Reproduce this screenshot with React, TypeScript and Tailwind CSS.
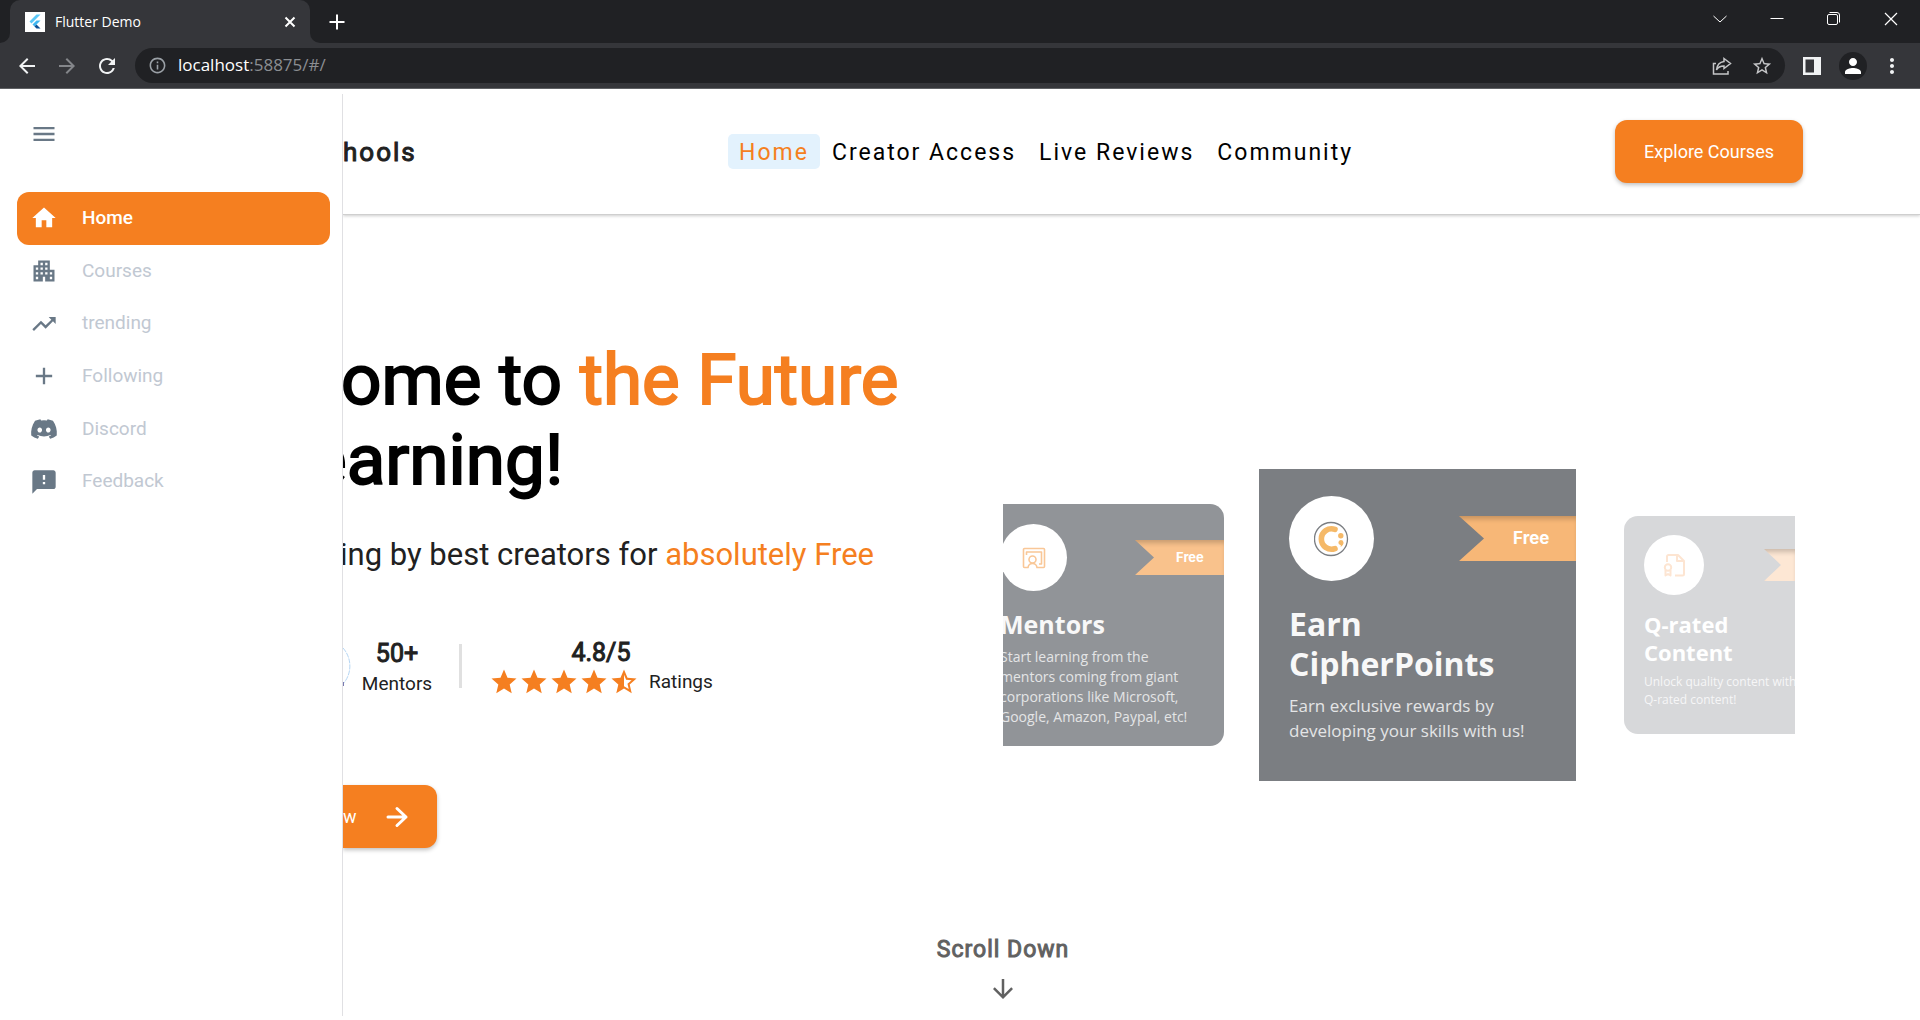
import type { ReactNode } from "react";
import { FaDiscord } from "react-icons/fa";
import {
  MdAdd,
  MdApartment,
  MdArrowBack,
  MdArrowDownward,
  MdArrowForward,
  MdFeedback,
  MdHome,
  MdInfoOutline,
  MdMenu,
  MdMoreVert,
  MdPerson,
  MdRefresh,
  MdStar,
  MdStarHalf,
  MdStarOutline,
  MdTrendingUp,
} from "react-icons/md";

function FlutterLogo() {
  return (
    <svg viewBox="0 0 20 20" className="size-5 bg-white" aria-hidden="true">
      <path d="M11.500 2.500h4L6.500 11.500l-2-2z" fill="#5bc8f8" />
      <path d="M11.500 8.500h4l-4 4-2 2-2-2z" fill="#3fb6f0" />
      <path d="M9.500 14.500l2-2 4 4h-4z" fill="#0a4d94" />
    </svg>
  );
}

function BrowserBar() {
  return (
    <header className="shrink-0 border-b border-[#5f6164] bg-[#202124] font-['Open_Sans',sans-serif] text-white">
      <div className="flex h-[43px] items-center">
        <div className="flex h-full w-[10px] items-end bg-[#35363a]">
          <span className="h-full w-[10px] rounded-br-[10px] bg-[#202124]" />
        </div>
        <div className="flex h-full w-[300px] items-center rounded-t-[10px] bg-[#35363a] pr-[13px] pl-[15px]">
          <FlutterLogo />
          <span className="ml-[10px] text-[14px]">Flutter Demo</span>
          <button aria-label="Close tab" className="ml-auto">
            <svg viewBox="0 0 14 14" className="size-[14px]" stroke="white" strokeWidth="2">
              <path d="M2.5 2.5l9 9M11.5 2.5l-9 9" />
            </svg>
          </button>
        </div>
        <div className="h-full w-[10px] bg-[#35363a]">
          <div className="h-full rounded-bl-[10px] bg-[#202124]" />
        </div>
        <button aria-label="New tab" className="ml-2">
          <svg viewBox="0 0 18 18" className="size-[18px]" stroke="white" strokeWidth="2">
            <path d="M9 1.5v15M1.5 9h15" />
          </svg>
        </button>
        <div className="ml-auto flex items-center gap-[43px] pr-[22px] pb-[6px]">
          <button aria-label="Search tabs">
            <svg viewBox="0 0 14 14" className="size-[14px]" fill="none" stroke="white">
              <path d="M.5 4l6.500 6 6.500-6" />
            </svg>
          </button>
          <button aria-label="Minimize">
            <svg viewBox="0 0 14 14" className="size-[14px]" stroke="white">
              <path d="M.5 6.500h13" />
            </svg>
          </button>
          <button aria-label="Restore">
            <svg viewBox="0 0 14 14" className="size-[14px]" fill="none" stroke="white">
              <rect x=".5" y="2.500" width="10" height="10" rx="1.500" />
              <path d="M2.500 .5h7.500a2.500 2.500 0 0 1 2.500 2.500v7.500" />
            </svg>
          </button>
          <button aria-label="Close window">
            <svg viewBox="0 0 14 14" className="size-[14px]" stroke="white" strokeWidth="1.200">
              <path d="M1 1l12 12M13 1L1 13" />
            </svg>
          </button>
        </div>
      </div>
      <div className="flex h-[45px] items-center bg-[#35363a] pr-4 pl-[15px]">
        <button aria-label="Back" className="text-[#f1f3f4]">
          <MdArrowBack className="size-6" />
        </button>
        <button aria-label="Forward" className="ml-4 text-[#84868a]">
          <MdArrowForward className="size-6" />
        </button>
        <button aria-label="Reload" className="ml-4 text-[#f1f3f4]">
          <MdRefresh className="size-6" />
        </button>
        <div className="ml-4 flex h-[35px] flex-1 items-center rounded-full bg-[#202124] pr-3 pl-[13px]">
          <MdInfoOutline className="size-[19px] text-[#9aa0a6]" />
          <p className="ml-[11px] pb-px text-[17px] leading-6 text-[#8b8e92]">
            <span className="text-white">localhost</span>:58875/#/
          </p>
          <button aria-label="Share" className="ml-auto">
            <svg viewBox="0 0 20 20" className="size-5" fill="none" stroke="#c5c6c8" strokeWidth="1.500">
              <path d="M4 7.500H1.500V18H16v-3" />
              <path d="M12 2.500l6.500 5L12 12.500V10c-4 0-6 1-7.500 4 .5-5 3-8 7.500-8.500z" />
            </svg>
          </button>
          <button aria-label="Bookmark" className="ml-[19px] text-[#c5c6c8]">
            <MdStarOutline className="size-[22px]" />
          </button>
        </div>
        <button aria-label="Side panel" className="ml-[18px]">
          <svg viewBox="0 0 18 18" className="size-[18px]">
            <path d="M0 0h18v18H0zM2.500 2.500v13H11v-13z" fill="#f1f3f4" fillRule="evenodd" />
          </svg>
        </button>
        <button aria-label="Profile" className="ml-[18px] flex size-7 items-center justify-center rounded-full bg-[#202124]">
          <MdPerson className="size-6" />
        </button>
        <button aria-label="Menu" className="ml-[13px] text-[#f1f3f4]">
          <MdMoreVert className="size-6" />
        </button>
      </div>
    </header>
  );
}

const links = [
  { label: "Home", Icon: MdHome, active: true },
  { label: "Courses", Icon: MdApartment, active: false },
  { label: "trending", Icon: MdTrendingUp, active: false },
  { label: "Following", Icon: MdAdd, active: false },
  { label: "Discord", Icon: FaDiscord, active: false },
  { label: "Feedback", Icon: MdFeedback, active: false },
];

function Sidebar() {
  return (
    <aside className="mt-[5px] mb-1 flex w-[343px] shrink-0 flex-col border-r border-[#e0e0e3] pr-3 pl-[17px]">
      <button aria-label="Toggle menu" className="mt-[26px] ml-[13px] self-start text-[#697886]">
        <MdMenu className="size-7" />
      </button>
      <nav className="mt-11 grid h-[316px] grid-rows-6">
        {links.map(({ label, Icon, active }) => (
          <a
            key={label}
            href="#"
            className={
              active
                ? "flex items-center gap-6 rounded-xl bg-[#f57f20] pl-[13px] text-[19px] font-medium text-white"
                : "flex items-center gap-6 rounded-xl pl-[13px] text-[19px] text-[#c1c8d2]"
            }
          >
            <Icon className={active ? "size-7 text-white" : "size-7 text-[#697886]"} />
            {label}
          </a>
        ))}
      </nav>
    </aside>
  );
}

function TopNav() {
  return (
    <div className="flex h-[126px] items-center border-b border-[#cfcfcf] pr-[117px] shadow-[0_1px_3px_rgba(0,0,0,0.2)]">
      <p className="w-[385px] pt-[2px] text-[26px] tracking-[2px] text-[#212121] [-webkit-text-stroke:1px]">hools</p>
      <nav className="flex gap-[2px] text-[23px] leading-[33px] tracking-[2px] text-black">
        <a href="#" className="rounded-[5px] bg-[#e3f2fd] px-[11px] pt-[2px] text-[#f57f20]">Home</a>
        <a href="#" className="px-[10px] pt-[2px]">Creator Access</a>
        <a href="#" className="px-[11px] pt-[2px]">Live Reviews</a>
        <a href="#" className="px-[10px] pt-[2px]">Community</a>
      </nav>
      <button className="ml-auto h-[63px] rounded-xl bg-[#f57f20] px-[29px] text-[18px] text-white shadow-[0_2px_4px_rgba(0,0,0,0.25)]">
        Explore Courses
      </button>
    </div>
  );
}

function Intro() {
  return (
    <section className="pt-[125px]">
      <h1 className="text-[71px] leading-[80px] text-black [-webkit-text-stroke:2px]">
        <span className="-ml-[2px] block">
          ome to <span className="text-[#f57f20]">the Future</span>
        </span>
        <span className="-ml-[34px] block">earning!</span>
      </h1>
      <p className="mt-[37px] -ml-[3px] text-[31px] leading-9 text-[#212121]">
        ing by best creators for <span className="text-[#f57f20]">absolutely Free</span>
      </p>
      <div className="mt-[66px] flex items-start text-[19px] text-[#212121]">
        <svg viewBox="0 0 8 44" className="mt-[4px] h-[44px] w-2" fill="none" aria-hidden="true">
          <path d="M0 5A27 27 0 0 1 0 41" stroke="#b5d6f4" strokeDasharray="5 1" />
          <path d="M0 39v4" stroke="#7a7ab0" strokeWidth="2" />
        </svg>
        <div className="ml-[10px] flex w-[72px] flex-col items-center">
          <span className="text-[25px] leading-[30px] [-webkit-text-stroke:1px]">50+</span>
          <span className="mt-[3px] leading-6">Mentors</span>
        </div>
        <span className="mt-[5px] ml-[26px] h-[44px] w-[3px] bg-[#e0e0e0]" />
        <div className="ml-[27px] flex flex-col items-center">
          <span className="text-[25px] leading-7 [-webkit-text-stroke:1px]">4.8/5</span>
          <span className="flex items-center text-[#f57f20]">
            <MdStar className="size-[30px]" />
            <MdStar className="size-[30px]" />
            <MdStar className="size-[30px]" />
            <MdStar className="size-[30px]" />
            <MdStarHalf className="size-[30px]" />
            <span className="ml-[10px] leading-6 text-[#212121]">Ratings</span>
          </span>
        </div>
      </div>
      <button className="mt-[88px] flex h-[63px] w-[94px] items-center justify-between rounded-r-xl bg-[#f57f20] pr-[25px] text-[18px] text-white shadow-[0_2px_4px_rgba(0,0,0,0.25)]">
        w
        <svg viewBox="0 0 30 30" className="size-[30px]" fill="none" stroke="white" strokeWidth="3" strokeLinecap="round" strokeLinejoin="round" aria-hidden="true">
          <path d="M6 15h18M15 6.500l9 8.500-9 8.500" />
        </svg>
      </button>
    </section>
  );
}

function Ribbon({ className, children }: { className: string; children?: ReactNode }) {
  return (
    <div
      className={`flex items-center font-['Inter',sans-serif] font-bold text-white shadow-[inset_0_5px_5px_-2px_rgba(0,0,0,0.2)] ${className}`}
    >
      {children}
    </div>
  );
}

function TeacherIcon() {
  return (
    <svg viewBox="0 0 24 24" className="size-6" fill="none" stroke="#f9c797" strokeWidth="1.600" strokeLinejoin="round" aria-hidden="true">
      <path d="M6 21.500H2.500a1 1 0 0 1-1-1V3.500a1 1 0 0 1 1-1h19a1 1 0 0 1 1 1v17a1 1 0 0 1-1 1H15c-.5-3-2.500-4-4.500-4s-4 1-4.500 4z" />
      <path d="M4.500 9V6h15v12H17" />
      <circle cx="10.500" cy="13.500" r="3.500" />
    </svg>
  );
}

function CoinIcon() {
  return (
    <svg viewBox="0 0 36 36" className="size-9" fill="none" aria-hidden="true">
      <circle cx="17" cy="18" r="16.500" stroke="#7b7e82" strokeWidth="1.300" />
      <path d="M21 8.400a10.200 10.200 0 1 0 0 19.200" stroke="#f5b968" strokeWidth="5.600" strokeLinecap="round" />
      <circle cx="26.800" cy="14.700" r="2.700" fill="#f5b968" />
      <path d="M26.800 19a2.600 2.600 0 0 0-.5 5.100c.8.200.8 1 0 2.200 2.500-1.500 3.500-3.500 3.200-5A2.700 2.700 0 0 0 26.800 19z" fill="#f5b968" />
    </svg>
  );
}

function CertificateIcon() {
  return (
    <svg viewBox="0 0 22 24" className="h-6 w-[22px]" fill="none" stroke="#fde5d2" strokeWidth="2" strokeLinejoin="round" aria-hidden="true">
      <path d="M4 9V3.500A1.500 1.500 0 0 1 5.500 2H15l6 6v13a1.500 1.500 0 0 1-1.500 1.500H12" />
      <path d="M14 2v6h7" />
      <circle cx="5" cy="14.500" r="3.200" />
      <path d="M2.500 17v5.500L5 21l2.500 1.500V17" />
    </svg>
  );
}

function Carousel() {
  return (
    <section className="mt-[254px] flex items-center overflow-hidden font-['Open_Sans',sans-serif]">
      <article className="h-[242px] w-[221px] shrink-0 overflow-hidden rounded-r-[14px] bg-[#919498] pt-5">
        <div className="flex items-center justify-between">
          <div className="-ml-[3px] flex size-[67px] items-center justify-center rounded-full bg-white">
            <TeacherIcon />
          </div>
          <Ribbon className="h-[35px] w-[89px] bg-[#f9c28c] pl-[41px] text-[13px] [clip-path:polygon(0_0,100%_0,100%_100%,0_100%,19px_50%)]">
            Free
          </Ribbon>
        </div>
        <h2 className="mt-[17px] -ml-[3px] text-[25px] leading-8 font-bold text-[#f8f8f8]">Mentors</h2>
        <p className="mt-[7px] -ml-[3px] text-[14px] leading-5 whitespace-nowrap text-[#e4e5e6]">
          Start learning from the
          <br />
          mentors coming from giant
          <br />
          corporations like Microsoft,
          <br />
          Google, Amazon, Paypal, etc!
        </p>
      </article>
      <article className="ml-[35px] h-[312px] w-[317px] shrink-0 bg-[#7b7e82] pt-[27px] pl-[30px]">
        <div className="flex items-center justify-between">
          <div className="flex size-[85px] items-center justify-center rounded-full bg-white">
            <CoinIcon />
          </div>
          <Ribbon className="h-[45px] w-[117px] bg-[#f7b777] pl-[54px] text-[17px] [clip-path:polygon(0_0,100%_0,100%_100%,0_100%,25px_50%)]">
            Free
          </Ribbon>
        </div>
        <h2 className="mt-[23px] text-[32px] leading-10 font-bold text-[#f8f8f8]">
          Earn
          <br />
          CipherPoints
        </h2>
        <p className="mt-[9px] text-[17px] leading-[25px] whitespace-nowrap text-[#e4e5e6]">
          Earn exclusive rewards by
          <br />
          developing your skills with us!
        </p>
      </article>
      <article className="ml-12 h-[218px] min-w-0 flex-1 overflow-hidden rounded-l-[14px] bg-[#d7d8da] pt-[19px] pl-5">
        <div className="flex items-center justify-between">
          <div className="flex size-[60px] items-center justify-center rounded-full bg-white">
            <CertificateIcon />
          </div>
          <Ribbon className="h-8 w-[31px] bg-[#fde7d4] [clip-path:polygon(0_0,100%_0,100%_100%,0_100%,17px_50%)]" />
        </div>
        <h2 className="mt-[15px] text-[22px] leading-7 font-bold text-white">
          Q-rated
          <br />
          Content
        </h2>
        <p className="mt-[7px] text-[12px] leading-[18px] whitespace-nowrap text-[#f6f6f7]">
          Unlock quality content with
          <br />
          Q-rated content!
        </p>
      </article>
    </section>
  );
}

export default function App() {
  return (
    <div className="flex min-h-screen flex-col bg-white font-['Roboto',sans-serif]">
      <BrowserBar />
      <div className="flex flex-1">
        <Sidebar />
        <main className="min-w-0 flex-1 overflow-hidden">
          <TopNav />
          <div className="grid grid-cols-[5fr_6fr] items-start pr-[125px]">
            <Intro />
            <Carousel />
          </div>
          <a href="#" className="mt-[88px] flex flex-col items-center pr-[257px] text-[#616161]">
            <span className="text-[23px] leading-7 tracking-[1px] [-webkit-text-stroke:1px]">Scroll Down</span>
            <MdArrowDownward className="mt-[10px] size-[30px]" />
          </a>
        </main>
      </div>
    </div>
  );
}
